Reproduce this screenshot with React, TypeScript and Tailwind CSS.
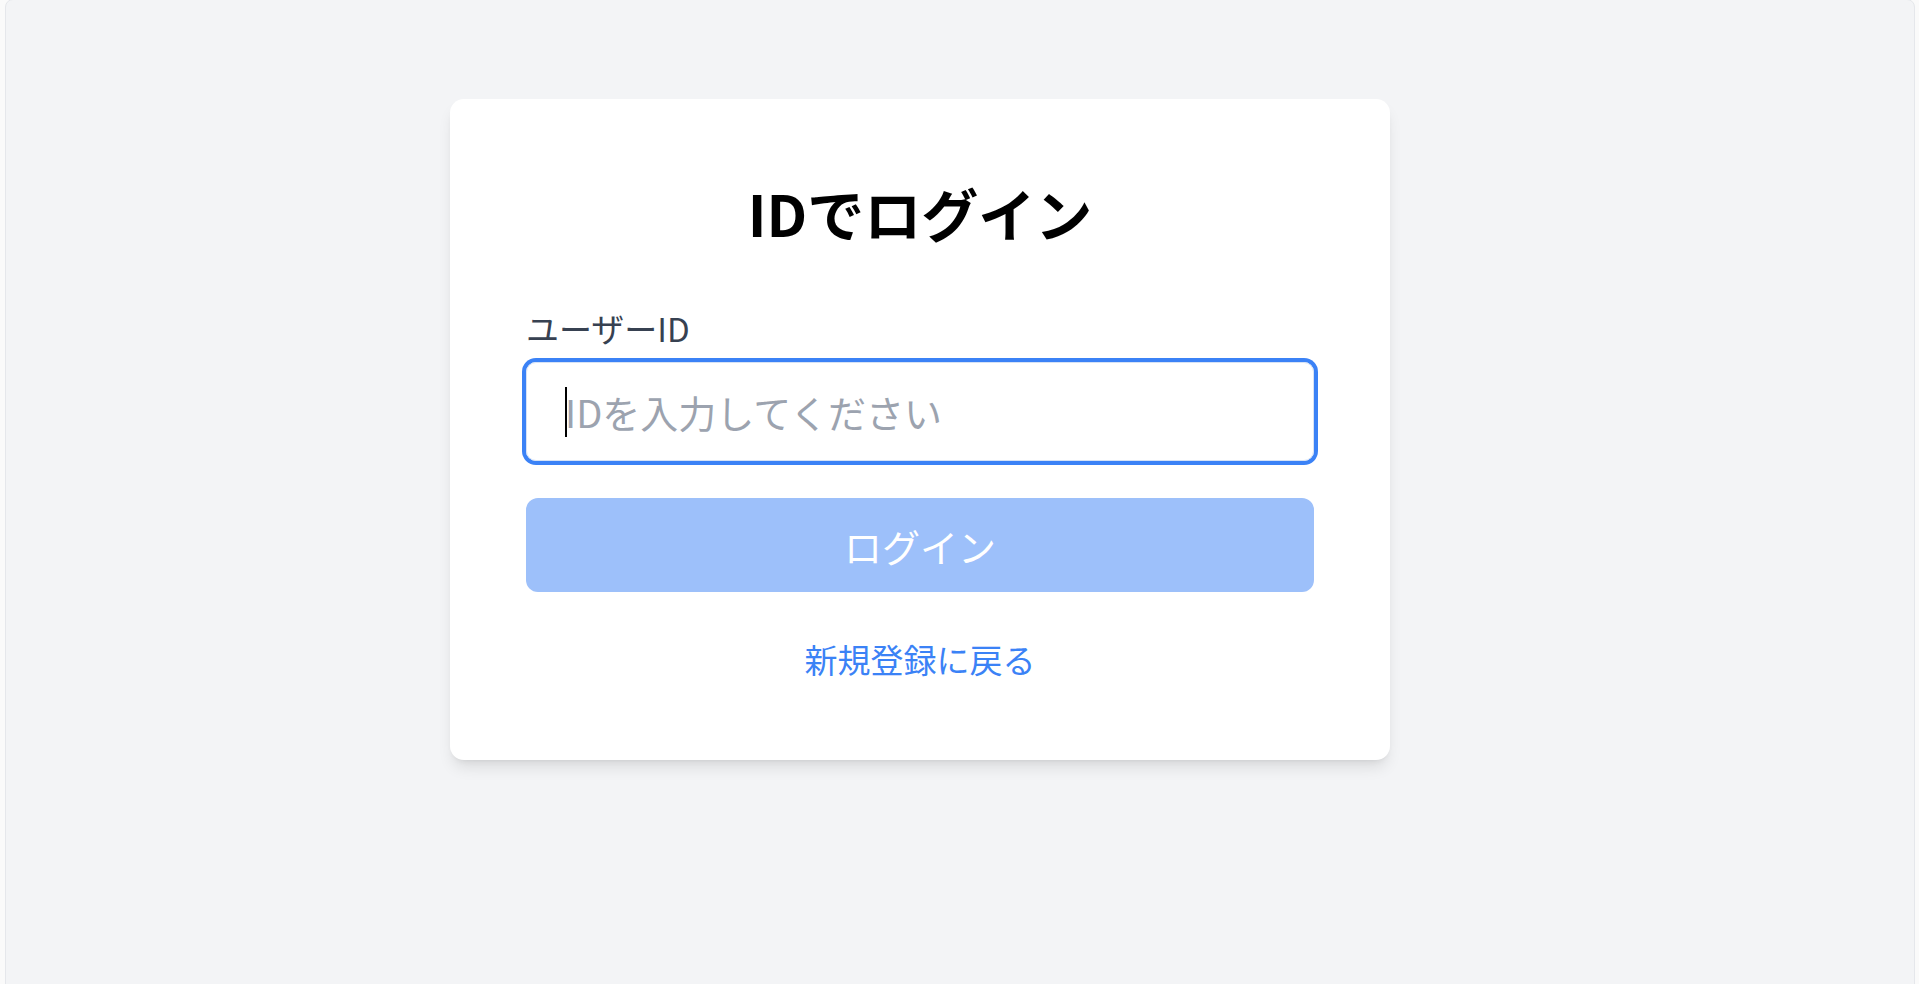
import { useState } from "react";

export default function App() {
  const [userId, setUserId] = useState("");

  return (
    <div className="min-h-screen overflow-hidden bg-[#fafafa] font-['Noto_Sans_CJK_JP','Noto_Sans',sans-serif]">
      {/* page frame */}
      <div className="ml-[5px] mr-[4px] -mt-px min-h-[1000px] rounded-lg border border-[#e5e7eb] bg-[#f3f4f6] pl-[444px] pt-[99px]">
        {/* login card */}
        <div className="flex w-[940px] flex-col rounded-[14px] bg-white px-[76px] pb-[79px] pt-[79px] shadow-lg">
          <h1 className="mb-[60px] text-center text-[57px] font-bold leading-[68px] text-black">
            IDでログイン
          </h1>

          <label
            htmlFor="userId"
            className="mb-[12px] text-[33px] leading-[44px] text-[#374151]"
          >
            ユーザーID
          </label>
          <div className="relative">
            <input
              id="userId"
              value={userId}
              onChange={(e) => setUserId(e.target.value)}
              placeholder="IDを入力してください"
              className="h-[99px] w-full rounded-[10px] border border-[#d6e2f5] pl-[38px] text-[38px] text-[#111827] caret-black outline-none ring-4 ring-[#3b82f6] placeholder:text-[#9ca3af]"
            />
            {/* caret */}
            {!userId && (
              <span className="pointer-events-none absolute left-[39px] top-[25px] h-[50px] w-[2px] bg-black" />
            )}
          </div>

          <button
            disabled={!userId}
            className="mt-[37px] h-[94px] w-full rounded-[12px] bg-[#9dc0fa] text-[38px] text-white"
          >
            ログイン
          </button>

          <a
            href="#"
            className="mt-[45px] self-center text-[33px] leading-[44px] text-[#3b82f6]"
          >
            新規登録に戻る
          </a>
        </div>
      </div>
    </div>
  );
}
